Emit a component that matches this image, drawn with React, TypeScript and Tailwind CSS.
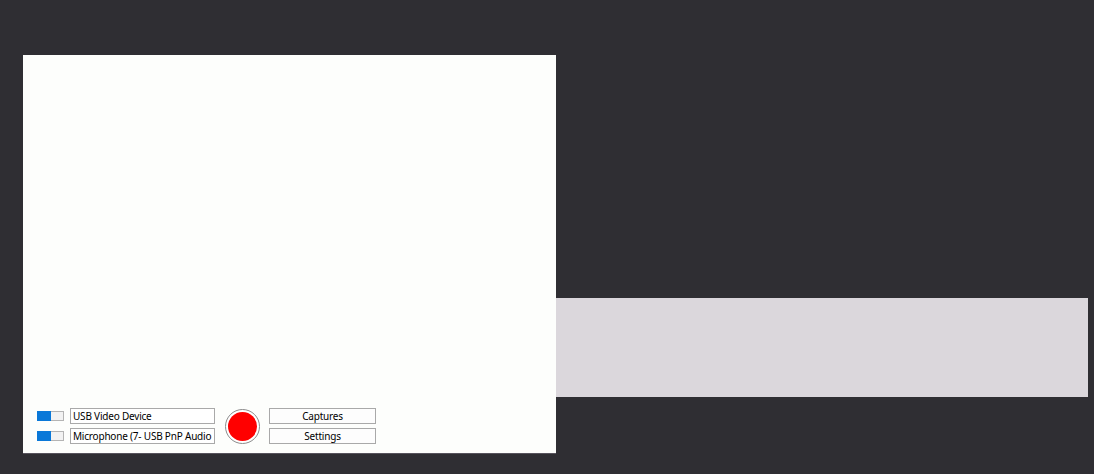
import React from "react";

const font = { fontFamily: '"Segoe UI", "Noto Sans", "Open Sans", sans-serif' };

function Toggle() {
    return (
        <div className="flex h-[10px] w-[27px] border border-[#b4b4b4] bg-[#f2f2f2]">
            <div className="-my-px -ml-px h-[10px] w-[14px] bg-[#0a78d8]" />
        </div>
    );
}

function DeviceRow({ label }: { label: string }) {
    return (
        <div className="flex items-center gap-[6px] h-[16px]">
            <Toggle />
            <div className="flex h-[16px] w-[145px] items-center overflow-hidden whitespace-nowrap border border-[#a9a9a9] bg-white pl-[2px] text-[10px] leading-none tracking-[-0.2px] text-black">
                {label}
            </div>
        </div>
    );
}

function SmallButton({ label }: { label: string }) {
    return (
        <button className="flex h-[16px] w-[107px] items-center justify-center border border-[#a9a9a9] bg-[#fdfdfd] text-[10px] leading-none tracking-[-0.2px] text-black">
            {label}
        </button>
    );
}

export default function App() {
    return (
        <div className="flex min-h-screen items-start bg-[#2f2e33] pl-[23px] pt-[55px]" style={font}>
            {/* Preview panel */}
            <div className="flex h-[399px] w-[533px] flex-col justify-end border-b border-[#57535c] bg-[#fdfefc]">
                <div className="flex items-center pb-[9px] pl-[14px]">
                    <div className="flex flex-col gap-[4px]">
                        <DeviceRow label="USB Video Device" />
                        <DeviceRow label="Microphone (7- USB PnP Audio" />
                    </div>

                    {/* Record button */}
                    <div className="ml-[10px] flex h-[35px] w-[35px] items-center justify-center rounded-full border border-[#8c8c8c] bg-white">
                        <div className="h-[29px] w-[29px] rounded-full bg-[#ff0000]" />
                    </div>

                    <div className="ml-[9px] flex flex-col gap-[4px]">
                        <SmallButton label="Captures" />
                        <SmallButton label="Settings" />
                    </div>
                </div>
            </div>

            {/* Side strip */}
            <div className="mt-[243px] h-[99px] w-[532px] bg-[#dbd7dc]" />
        </div>
    );
}
